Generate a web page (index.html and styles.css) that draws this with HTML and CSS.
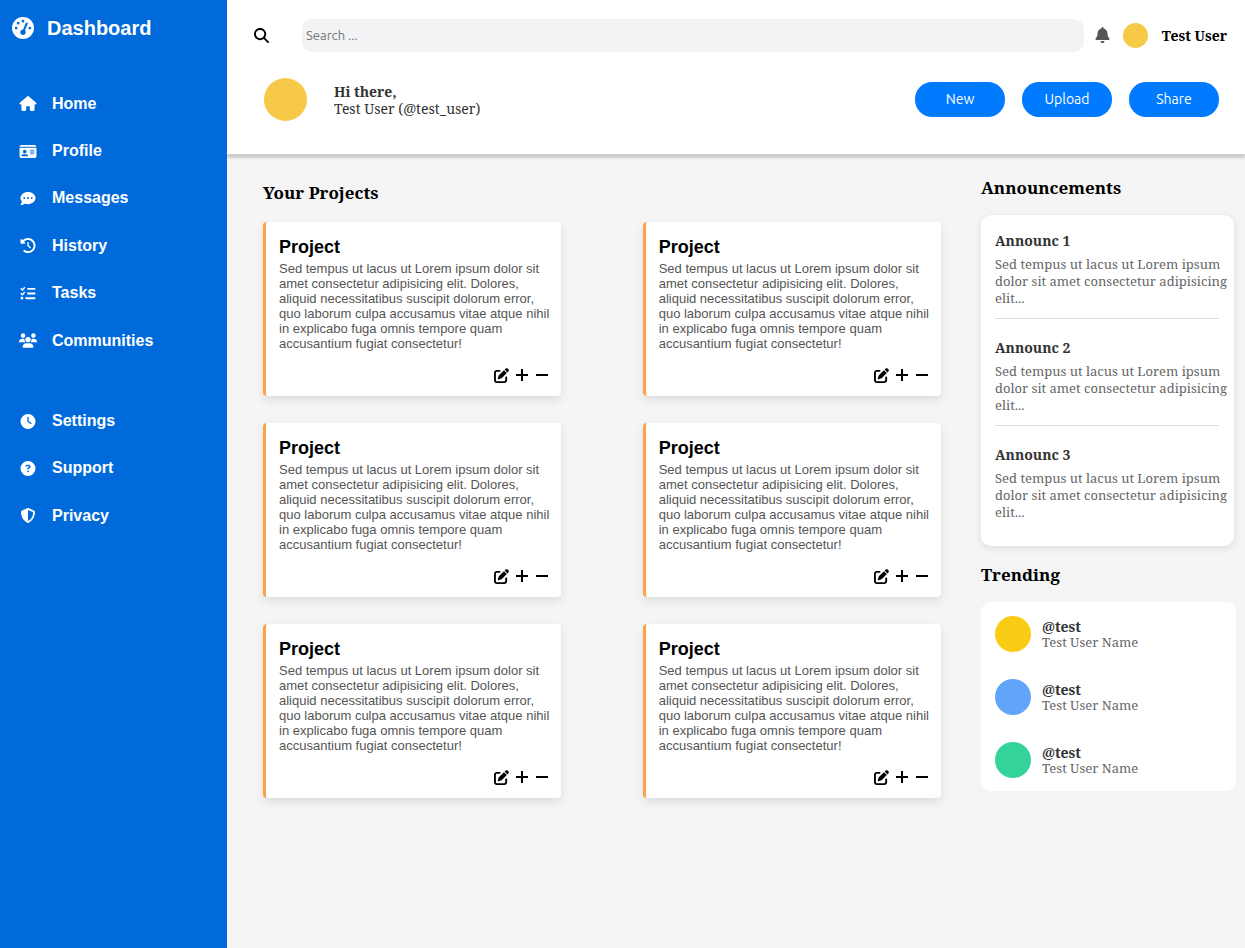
FILE: index.html
```html
<!DOCTYPE html>
<html lang="en">
<head>
<meta charset="utf-8">
<meta name="viewport" content="width=device-width, initial-scale=1">
<title>Dashboard</title>
<link rel="stylesheet" href="styles.css">
</head>
<body>
<svg class="sprite" aria-hidden="true">
  <symbol id="gauge" viewBox="0 0 512 512"><path d="M0 256a256 256 0 1 1 512 0A256 256 0 1 1 0 256zM288 96a32 32 0 1 0 -64 0 32 32 0 1 0 64 0zM256 416c35.3 0 64-28.7 64-64c0-17.4-6.9-33.1-18.1-44.6L366 161.7c5.3-12.1-.2-26.3-12.3-31.6s-26.3 .2-31.6 12.3L257.9 288c-.6 0-1.3 0-1.9 0c-35.3 0-64 28.7-64 64s28.7 64 64 64zM176 144a32 32 0 1 0 -64 0 32 32 0 1 0 64 0zM96 288a32 32 0 1 0 0-64 32 32 0 1 0 0 64zm352-32a32 32 0 1 0 -64 0 32 32 0 1 0 64 0z"/></symbol>
  <symbol id="house" viewBox="0 0 576 512"><path d="M575.8 255.5c0 18-15 32.1-32 32.1h-32l.7 160.2c0 2.7-.2 5.4-.5 8.1V472c0 22.1-17.9 40-40 40H456c-1.1 0-2.2 0-3.3-.1c-1.4 .1-2.8 .1-4.2 .1H416 392c-22.1 0-40-17.9-40-40V448 384c0-17.7-14.3-32-32-32H256c-17.7 0-32 14.3-32 32v64 24c0 22.1-17.9 40-40 40H160 128.1c-1.5 0-3-.1-4.5-.2c-1.2 .1-2.4 .2-3.6 .2H104c-22.1 0-40-17.9-40-40V360c0-.9 0-1.9 .1-2.8V287.6H32c-18 0-32-14-32-32.1c0-9 3-17 10-24L266.4 8c7-7 15-8 22-8s15 2 21 7L564.8 231.5c8 7 12 15 11 24z"/></symbol>
  <symbol id="card" viewBox="0 0 576 512"><path d="M0 96l576 0c0-35.3-28.7-64-64-64H64C28.7 32 0 60.7 0 96zm0 32V416c0 35.3 28.7 64 64 64H512c35.3 0 64-28.7 64-64V128H0zM64 405.3c0-29.5 23.9-53.3 53.3-53.3H234.7c29.5 0 53.3 23.9 53.3 53.3c0 5.9-4.8 10.7-10.7 10.7H74.7c-5.9 0-10.7-4.8-10.7-10.7zM176 192a64 64 0 1 1 0 128 64 64 0 1 1 0-128zm176 16c0-8.8 7.2-16 16-16H496c8.8 0 16 7.2 16 16s-7.2 16-16 16H368c-8.8 0-16-7.2-16-16zm0 64c0-8.8 7.2-16 16-16H496c8.8 0 16 7.2 16 16s-7.2 16-16 16H368c-8.8 0-16-7.2-16-16zm0 64c0-8.8 7.2-16 16-16H496c8.8 0 16 7.2 16 16s-7.2 16-16 16H368c-8.8 0-16-7.2-16-16z"/></symbol>
  <symbol id="comment" viewBox="0 0 512 512"><path d="M256 448c141.4 0 256-93.1 256-208S397.4 32 256 32S0 125.1 0 240c0 45.1 17.7 86.8 47.7 120.9c-1.9 24.5-11.4 46.3-21.4 62.9c-5.5 9.2-11.1 16.6-15.2 21.6c-2.1 2.5-3.7 4.4-4.9 5.7c-.6 .6-1 1.1-1.3 1.4l-.3 .3c-4.6 4.6-5.9 11.4-3.4 17.4c2.5 6 8.3 9.9 14.8 9.9c28.7 0 57.6-8.9 81.6-19.3c22.9-10 42.4-21.9 54.3-30.6c31.8 11.5 67 17.9 104.1 17.9zM128 208a32 32 0 1 1 0 64 32 32 0 1 1 0-64zm128 0a32 32 0 1 1 0 64 32 32 0 1 1 0-64zm96 32a32 32 0 1 1 64 0 32 32 0 1 1 -64 0z"/></symbol>
  <symbol id="history" viewBox="0 0 512 512"><path d="M75 75L41 41C25.9 25.9 0 36.6 0 57.9V168c0 13.3 10.7 24 24 24H134.1c21.4 0 32.1-25.9 17-41l-30.8-30.8C155 85.5 203 64 256 64c106 0 192 86 192 192s-86 192-192 192c-40.8 0-78.6-12.7-109.7-34.4c-14.5-10.1-34.4-6.6-44.6 7.9s-6.6 34.4 7.9 44.6C151.2 495 201.7 512 256 512c141.4 0 256-114.6 256-256S397.4 0 256 0C185.3 0 121.3 28.7 75 75zm181 53c-13.3 0-24 10.7-24 24V256c0 6.4 2.5 12.5 7 17l72 72c9.4 9.4 24.6 9.4 33.9 0s9.4-24.6 0-33.9l-65-65V152c0-13.3-10.7-24-24-24z"/></symbol>
  <symbol id="tasks" viewBox="0 0 512 512"><path d="M152.1 38.2c9.9 8.9 10.7 24 1.8 33.9l-72 80c-4.4 4.9-10.6 7.8-17.2 7.9s-12.9-2.4-17.6-7L7 113C-2.3 103.6-2.3 88.4 7 79s24.6-9.4 33.9 0l22.1 22.1 55.1-61.2c8.9-9.9 24-10.7 33.9-1.8zm0 160c9.9 8.9 10.7 24 1.8 33.9l-72 80c-4.4 4.9-10.6 7.8-17.2 7.9s-12.9-2.4-17.6-7L7 273c-9.4-9.4-9.4-24.6 0-33.9s24.6-9.4 33.9 0l22.1 22.1 55.1-61.2c8.9-9.9 24-10.7 33.9-1.8zM224 96c0-17.7 14.3-32 32-32H480c17.7 0 32 14.3 32 32s-14.3 32-32 32H256c-17.7 0-32-14.3-32-32zm0 160c0-17.7 14.3-32 32-32H480c17.7 0 32 14.3 32 32s-14.3 32-32 32H256c-17.7 0-32-14.3-32-32zM160 416c0-17.7 14.3-32 32-32H480c17.7 0 32 14.3 32 32s-14.3 32-32 32H192c-17.7 0-32-14.3-32-32zM48 368a48 48 0 1 1 0 96 48 48 0 1 1 0-96z"/></symbol>
  <symbol id="users" viewBox="0 0 640 512"><path d="M144 0a80 80 0 1 1 0 160A80 80 0 1 1 144 0zM512 0a80 80 0 1 1 0 160A80 80 0 1 1 512 0zM0 298.7C0 239.8 47.8 192 106.7 192h42.7c15.9 0 31 3.5 44.6 9.7c-1.3 7.2-1.9 14.7-1.9 22.3c0 38.2 16.8 72.5 43.3 96c-.2 0-.4 0-.7 0H21.3C9.6 320 0 310.4 0 298.7zM405.3 320c-.2 0-.4 0-.7 0c26.6-23.5 43.3-57.8 43.3-96c0-7.6-.7-15-1.9-22.3c13.6-6.3 28.7-9.7 44.6-9.7h42.7C592.2 192 640 239.8 640 298.7c0 11.8-9.6 21.3-21.3 21.3H405.3zM224 224a96 96 0 1 1 192 0 96 96 0 1 1 -192 0zM128 485.3C128 411.7 187.7 352 261.3 352H378.7C452.3 352 512 411.7 512 485.3c0 14.7-11.9 26.7-26.7 26.7H154.7c-14.7 0-26.7-11.9-26.7-26.7z"/></symbol>
  <symbol id="clock" viewBox="0 0 512 512"><path d="M256 0a256 256 0 1 1 0 512A256 256 0 1 1 256 0zM232 120V256c0 8 4 15.5 10.7 20l96 64c11 7.4 25.9 4.4 33.3-6.7s4.4-25.9-6.7-33.3L280 243.2V120c0-13.3-10.7-24-24-24s-24 10.7-24 24z"/></symbol>
  <symbol id="question" viewBox="0 0 512 512"><path d="M256 512A256 256 0 1 0 256 0a256 256 0 1 0 0 512zM169.8 165.3c7.9-22.3 29.1-37.3 52.8-37.3h58.3c34.9 0 63.1 28.3 63.1 63.1c0 22.6-12.1 43.5-31.7 54.8L280 264.4c-.2 13-10.9 23.6-24 23.6c-13.3 0-24-10.7-24-24V250.5c0-8.6 4.6-16.5 12.1-20.8l44.3-25.4c4.7-2.7 7.6-7.7 7.6-13.1c0-8.4-6.8-15.1-15.1-15.1H222.6c-3.4 0-6.4 2.1-7.5 5.3l-.4 1.2c-4.4 12.5-18.2 19-30.6 14.6s-19-18.2-14.6-30.6l.4-1.2zM224 352a32 32 0 1 1 64 0 32 32 0 1 1 -64 0z"/></symbol>
  <symbol id="shield" viewBox="0 0 512 512"><path d="M256 0c4.6 0 9.2 1 13.4 2.9L457.7 82.8c22 9.3 38.4 31 38.3 57.2c-.5 99.2-41.3 280.7-213.6 363.2c-16.7 8-36.1 8-52.8 0C57.3 420.7 16.5 239.2 16 140c-.1-26.2 16.3-47.9 38.3-57.2L242.7 2.9C246.8 1 251.4 0 256 0zm0 66.8V444.8C394 378 431.1 230.1 432 141.4L256 66.8z"/></symbol>
  <symbol id="search-icon" viewBox="0 0 512 512"><path d="M416 208c0 45.9-14.9 88.3-40 122.7L502.6 457.4c12.5 12.5 12.5 32.8 0 45.3s-32.8 12.5-45.3 0L330.7 376c-34.4 25.2-76.8 40-122.7 40C93.1 416 0 322.9 0 208S93.1 0 208 0S416 93.1 416 208zM208 352a144 144 0 1 0 0-288 144 144 0 1 0 0 288z"/></symbol>
  <symbol id="bell" viewBox="0 0 448 512"><path d="M224 0c-17.7 0-32 14.3-32 32V51.2C119 66 64 130.6 64 208v18.8c0 47-17.3 92.4-48.5 127.6l-7.4 8.3c-8.4 9.4-10.4 22.9-5.3 34.4S19.4 416 32 416H416c12.6 0 24-7.4 29.2-18.9s3.1-25-5.3-34.4l-7.4-8.3C401.3 319.2 384 273.9 384 226.8V208c0-77.4-55-142-128-156.8V32c0-17.7-14.3-32-32-32zm45.3 493.3c12-12 18.7-28.3 18.7-45.3H224 160c0 17 6.7 33.3 18.7 45.3s28.3 18.7 45.3 18.7s33.3-6.7 45.3-18.7z"/></symbol>
  <symbol id="edit" viewBox="0 0 512 512"><path d="M471.6 21.7c-21.9-21.9-57.3-21.9-79.2 0L362.3 51.7l97.9 97.9 30.1-30.1c21.9-21.9 21.9-57.3 0-79.2L471.6 21.7zm-299.2 220c-6.1 6.1-10.8 13.6-13.5 21.9l-29.6 88.8c-2.9 8.6-.6 18.1 5.8 24.6s15.9 8.7 24.6 5.8l88.8-29.6c8.2-2.7 15.7-7.4 21.9-13.5L437.7 172.3 339.7 74.3 172.4 241.7zM96 64C43 64 0 107 0 160V416c0 53 43 96 96 96H352c53 0 96-43 96-96V320c0-17.7-14.3-32-32-32s-32 14.3-32 32v96c0 17.7-14.3 32-32 32H96c-17.7 0-32-14.3-32-32V160c0-17.7 14.3-32 32-32h96c17.7 0 32-14.3 32-32s-14.3-32-32-32H96z"/></symbol>
  <symbol id="plus" viewBox="0 0 14 16"><path d="M6 1h2v5h5v2H8v5H6V8H1V6h5z"/></symbol>
  <symbol id="minus" viewBox="0 0 14 16"><path d="M1 6h12v2H1z"/></symbol>
</svg>
<div class="layout">
  <nav class="sidebar" aria-label="Main">
    <div class="brand"><svg class="brand-icon"><use href="#gauge"/></svg><h1 class="brand-name">Dashboard</h1></div>
    <ul class="menu">
      <li><a class="menu-link" href="#"><svg class="menu-icon"><use href="#house"/></svg>Home</a></li>
      <li><a class="menu-link" href="#"><svg class="menu-icon"><use href="#card"/></svg>Profile</a></li>
      <li><a class="menu-link" href="#"><svg class="menu-icon"><use href="#comment"/></svg>Messages</a></li>
      <li><a class="menu-link" href="#"><svg class="menu-icon"><use href="#history"/></svg>History</a></li>
      <li><a class="menu-link" href="#"><svg class="menu-icon"><use href="#tasks"/></svg>Tasks</a></li>
      <li><a class="menu-link" href="#"><svg class="menu-icon"><use href="#users"/></svg>Communities</a></li>
    </ul>
    <ul class="menu">
      <li><a class="menu-link" href="#"><svg class="menu-icon"><use href="#clock"/></svg>Settings</a></li>
      <li><a class="menu-link" href="#"><svg class="menu-icon"><use href="#question"/></svg>Support</a></li>
      <li><a class="menu-link" href="#"><svg class="menu-icon"><use href="#shield"/></svg>Privacy</a></li>
    </ul>
  </nav>
  <div class="page">
    <header class="header">
      <div class="topbar">
        <label class="search-label" for="search" aria-label="Search"><svg class="icon"><use href="#search-icon"/></svg></label>
        <input class="search" id="search" type="search" placeholder="Search ...">
        <button class="bell" type="button" aria-label="Notifications"><svg class="bell-icon"><use href="#bell"/></svg></button>
        <span class="avatar avatar-small"></span>
        <span class="user">Test User</span>
      </div>
      <div class="welcome">
        <span class="avatar avatar-large"></span>
        <div class="greeting"><strong>Hi there,</strong><span>Test User (@test_user)</span></div>
        <div class="buttons">
          <button class="button" type="button">New</button>
          <button class="button" type="button">Upload</button>
          <button class="button" type="button">Share</button>
        </div>
      </div>
    </header>
    <main class="content">
      <section class="projects">
        <h2 class="title">Your Projects</h2>
        <div class="project-grid">
          <article class="project"><h3 class="project-name">Project</h3><p class="project-text">Sed tempus ut lacus ut Lorem ipsum dolor sit amet consectetur adipisicing elit. Dolores, aliquid necessitatibus suscipit dolorum error, quo laborum culpa accusamus vitae atque nihil in explicabo fuga omnis tempore quam accusantium fugiat consectetur!</p><div class="actions"><button class="action" type="button" aria-label="Edit"><svg class="icon"><use href="#edit"/></svg></button><button class="action" type="button" aria-label="Add"><svg class="sign"><use href="#plus"/></svg></button><button class="action" type="button" aria-label="Remove"><svg class="sign"><use href="#minus"/></svg></button></div></article>
          <article class="project"><h3 class="project-name">Project</h3><p class="project-text">Sed tempus ut lacus ut Lorem ipsum dolor sit amet consectetur adipisicing elit. Dolores, aliquid necessitatibus suscipit dolorum error, quo laborum culpa accusamus vitae atque nihil in explicabo fuga omnis tempore quam accusantium fugiat consectetur!</p><div class="actions"><button class="action" type="button" aria-label="Edit"><svg class="icon"><use href="#edit"/></svg></button><button class="action" type="button" aria-label="Add"><svg class="sign"><use href="#plus"/></svg></button><button class="action" type="button" aria-label="Remove"><svg class="sign"><use href="#minus"/></svg></button></div></article>
          <article class="project"><h3 class="project-name">Project</h3><p class="project-text">Sed tempus ut lacus ut Lorem ipsum dolor sit amet consectetur adipisicing elit. Dolores, aliquid necessitatibus suscipit dolorum error, quo laborum culpa accusamus vitae atque nihil in explicabo fuga omnis tempore quam accusantium fugiat consectetur!</p><div class="actions"><button class="action" type="button" aria-label="Edit"><svg class="icon"><use href="#edit"/></svg></button><button class="action" type="button" aria-label="Add"><svg class="sign"><use href="#plus"/></svg></button><button class="action" type="button" aria-label="Remove"><svg class="sign"><use href="#minus"/></svg></button></div></article>
          <article class="project"><h3 class="project-name">Project</h3><p class="project-text">Sed tempus ut lacus ut Lorem ipsum dolor sit amet consectetur adipisicing elit. Dolores, aliquid necessitatibus suscipit dolorum error, quo laborum culpa accusamus vitae atque nihil in explicabo fuga omnis tempore quam accusantium fugiat consectetur!</p><div class="actions"><button class="action" type="button" aria-label="Edit"><svg class="icon"><use href="#edit"/></svg></button><button class="action" type="button" aria-label="Add"><svg class="sign"><use href="#plus"/></svg></button><button class="action" type="button" aria-label="Remove"><svg class="sign"><use href="#minus"/></svg></button></div></article>
          <article class="project"><h3 class="project-name">Project</h3><p class="project-text">Sed tempus ut lacus ut Lorem ipsum dolor sit amet consectetur adipisicing elit. Dolores, aliquid necessitatibus suscipit dolorum error, quo laborum culpa accusamus vitae atque nihil in explicabo fuga omnis tempore quam accusantium fugiat consectetur!</p><div class="actions"><button class="action" type="button" aria-label="Edit"><svg class="icon"><use href="#edit"/></svg></button><button class="action" type="button" aria-label="Add"><svg class="sign"><use href="#plus"/></svg></button><button class="action" type="button" aria-label="Remove"><svg class="sign"><use href="#minus"/></svg></button></div></article>
          <article class="project"><h3 class="project-name">Project</h3><p class="project-text">Sed tempus ut lacus ut Lorem ipsum dolor sit amet consectetur adipisicing elit. Dolores, aliquid necessitatibus suscipit dolorum error, quo laborum culpa accusamus vitae atque nihil in explicabo fuga omnis tempore quam accusantium fugiat consectetur!</p><div class="actions"><button class="action" type="button" aria-label="Edit"><svg class="icon"><use href="#edit"/></svg></button><button class="action" type="button" aria-label="Add"><svg class="sign"><use href="#plus"/></svg></button><button class="action" type="button" aria-label="Remove"><svg class="sign"><use href="#minus"/></svg></button></div></article>
        </div>
      </section>
      <aside class="aside">
        <h2 class="title">Announcements</h2>
        <div class="panel announcements">
          <article class="announcement"><h3 class="item-name">Announc 1</h3><p class="announcement-text">Sed tempus ut lacus ut Lorem ipsum dolor sit amet consectetur adipisicing elit...</p></article>
          <article class="announcement"><h3 class="item-name">Announc 2</h3><p class="announcement-text">Sed tempus ut lacus ut Lorem ipsum dolor sit amet consectetur adipisicing elit...</p></article>
          <article class="announcement"><h3 class="item-name">Announc 3</h3><p class="announcement-text">Sed tempus ut lacus ut Lorem ipsum dolor sit amet consectetur adipisicing elit...</p></article>
        </div>
        <h2 class="title">Trending</h2>
        <ul class="panel trending">
          <li class="trend"><span class="avatar avatar-medium yellow"></span><div><h3 class="item-name">@test</h3><p class="trend-text">Test User Name</p></div></li>
          <li class="trend"><span class="avatar avatar-medium blue"></span><div><h3 class="item-name">@test</h3><p class="trend-text">Test User Name</p></div></li>
          <li class="trend"><span class="avatar avatar-medium green"></span><div><h3 class="item-name">@test</h3><p class="trend-text">Test User Name</p></div></li>
        </ul>
      </aside>
    </main>
  </div>
</div>
</body>
</html>
```
FILE: styles.css
```css
*, *::before, *::after { box-sizing: border-box; }
body, h1, h2, h3, p, ul { margin: 0; padding: 0; }
ul { list-style: none; }
svg { display: block; flex: none; fill: currentColor; }
button { border: 0; padding: 0; background: none; color: inherit; cursor: pointer; }
body {
  font-family: "Noto Serif", "Droid Serif", "Liberation Serif", serif;
  font-size: 14px;
  color: #000;
  background: #f5f5f5;
}
.sprite { display: none; }
.layout {
  display: grid;
  grid-template-columns: minmax(200px, 227fr) 1018fr;
  min-height: 100vh;
}

.sidebar {
  background: #006adb;
  color: #fff;
  font-family: "Liberation Sans", Arial, sans-serif;
  z-index: 1;
}
.brand { display: flex; align-items: center; gap: 13px; padding: 16px 12px 40px; }
.brand-icon { width: 22px; height: 22px; }
.brand-name { font-size: 20px; line-height: 24px; }
.menu { margin-bottom: 33px; }
.menu-link {
  display: flex;
  align-items: center;
  gap: 15px;
  min-height: 5vh;
  padding-left: 19px;
  color: inherit;
  font-size: 16px;
  font-weight: bold;
  text-decoration: none;
}
.menu-icon { width: 18px; height: 15px; }

.header {
  position: relative;
  padding: 19px 18px 33px 27px;
  background: #fff;
  box-shadow: 0 4px 2px rgba(0, 0, 0, 0.16);
}
.icon { width: 15px; height: 15px; }
.topbar { display: flex; align-items: center; }
.search-label { margin-right: 33px; }
.search {
  flex: 1;
  min-width: 0;
  height: 33px;
  padding: 0 4px 2px;
  border: 0;
  border-radius: 10px;
  background: #f1f3f5;
  font-family: Ubuntu, "Noto Sans", sans-serif;
  font-size: 13px;
}
.search::placeholder { color: #757575; }
.bell { margin: 0 13px 0 11px; padding-bottom: 2px; color: #555; }
.bell-icon { width: 15px; height: 16px; }
.avatar { flex: none; border-radius: 50%; background: #f6c948; }
.avatar-small { width: 25px; height: 25px; margin-right: 14px; }
.avatar-medium { width: 36px; height: 36px; }
.avatar-large { width: 43px; height: 43px; }
.user { font-weight: bold; }
.welcome { display: flex; align-items: center; padding: 26px 8px 0 10px; }
.greeting {
  display: flex;
  flex-direction: column;
  margin-left: 27px;
  color: #333;
  line-height: 17px;
}
.buttons { display: grid; grid-template-columns: repeat(3, 90px); gap: 17px; margin-left: auto; }
.button {
  height: 35px;
  padding-bottom: 2px;
  border-radius: 17px;
  background: #007bff;
  color: #fff;
  font-family: Ubuntu, "Noto Sans", sans-serif;
  font-size: 14px;
}

.content {
  display: grid;
  grid-template-columns: minmax(0, 678fr) minmax(0, 255fr);
  gap: 40px;
  padding: 22px 9px 40px 36px;
}
.title { font-size: 17px; line-height: 24px; }
.projects { padding-top: 5px; }
.project-grid {
  display: grid;
  grid-template-columns: 1fr 1fr;
  gap: 27px 12%;
  margin-top: 17px;
}
.project {
  padding: 14px 8px 13px 13px;
  border-left: 3px solid #ffa048;
  border-radius: 4px;
  background: #fff;
  box-shadow: 0 4px 10px rgba(0, 0, 0, 0.1);
  font-family: "Liberation Sans", Arial, sans-serif;
}
.project-name { font-size: 18px; line-height: 22px; }
.project-text { margin-top: 3px; color: #555; font-size: 13px; line-height: 15px; }
.actions {
  display: flex;
  justify-content: flex-end;
  align-items: center;
  gap: 6px;
  margin-top: 17px;
  padding-right: 4px;
}
.sign { width: 14px; height: 16px; }
.action { height: 15px; }

.aside .title + .panel { margin-top: 15px; }
.aside .announcements { margin: 0 2px 17px 0; padding: 0 7px 14px 14px; box-shadow: 0 2px 8px rgba(0, 0, 0, 0.1); }
.panel { border-radius: 10px; background: #fff; }
.announcement { padding: 16px 0 11px; }
.announcement + .announcement::before {
  content: "";
  display: block;
  margin: -16px 8px 19px 0;
  border-top: 1px solid #ddd;
}
.item-name { color: #333; font-size: 14px; line-height: 20px; }
.announcement-text { margin-top: 5px; color: #666; font-size: 13px; line-height: 17px; }
.trending { display: grid; gap: 27px; padding: 14px 14px 13px; }
.trend { display: flex; align-items: center; gap: 11px; }
.trend .item-name { line-height: 17px; }
.trend-text { color: #666; font-size: 13px; line-height: 15px; }
.yellow { background: #facc15; }
.blue { background: #60a5fa; }
.green { background: #34d399; }
```
